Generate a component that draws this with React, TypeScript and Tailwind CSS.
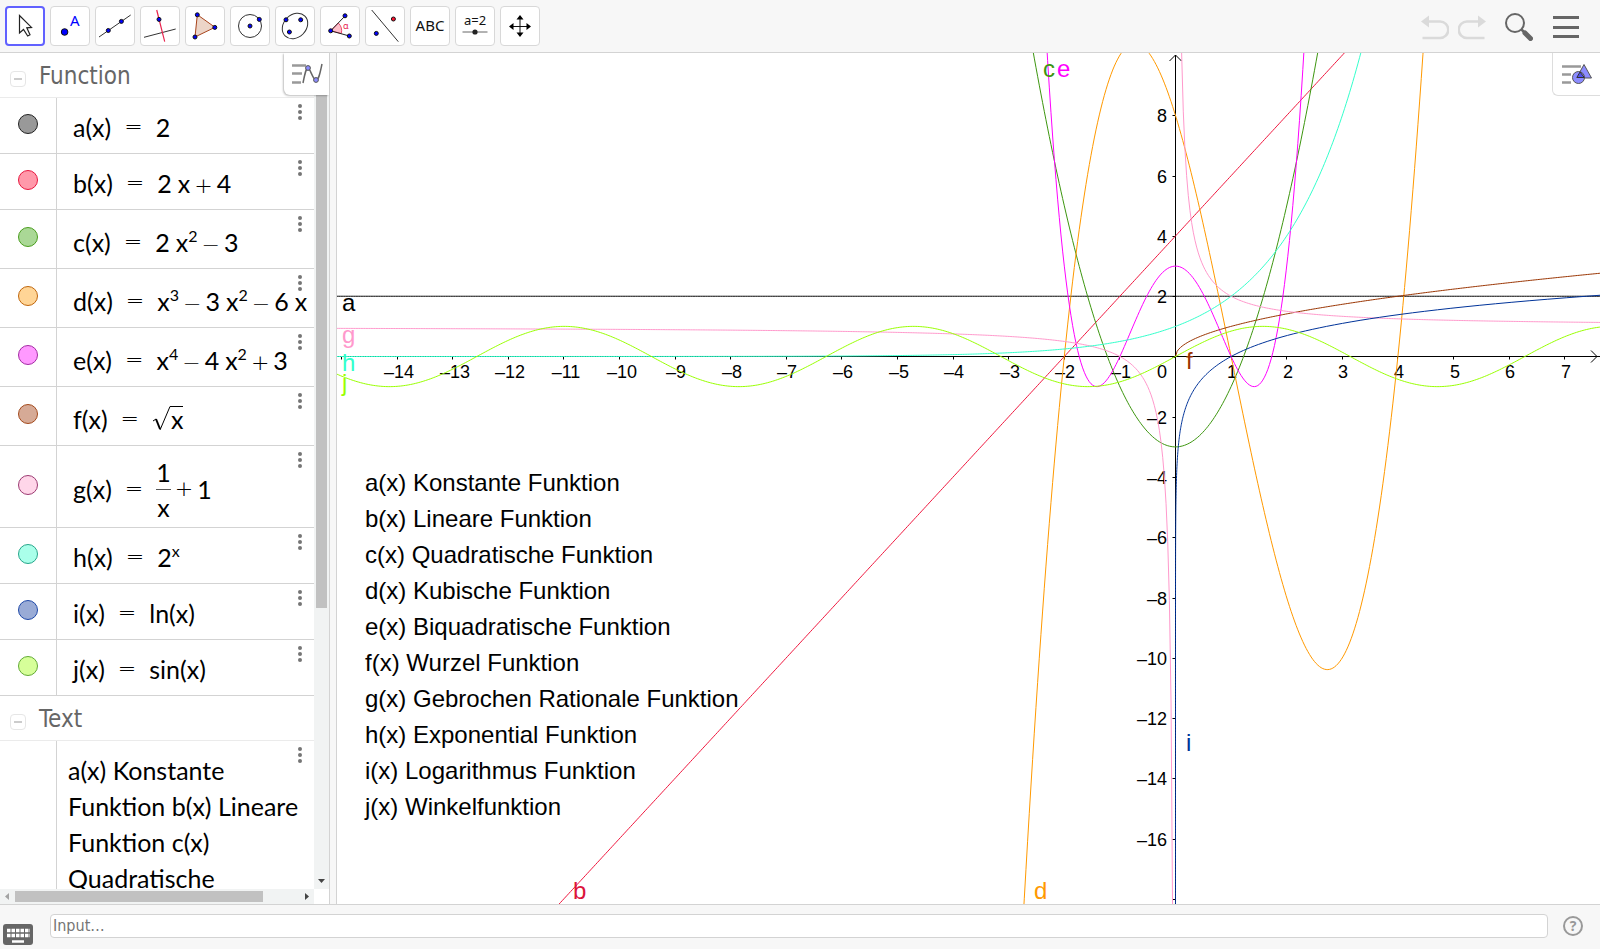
import type { ReactNode } from "react";
import { clsx } from "clsx";

const SANS = "font-['Liberation_Sans',Arial,sans-serif]";
const MATH = "font-[Lato,'Noto_Sans',sans-serif]";
const UI = "font-['Noto_Sans','Open_Sans',sans-serif]";
const CONDENSED = "font-['DejaVu_Sans_Condensed','Noto_Sans',sans-serif]";

// ---------- toolbar ----------

function Pt({ x, y, r = 2, fill = "#0000ff" }: { x: number; y: number; r?: number; fill?: string }) {
  return <circle cx={x} cy={y} r={r} fill={fill} stroke="#111" strokeWidth="1" />;
}

const TOOLS: { name: string; icon: ReactNode }[] = [
  {
    name: "Move",
    icon: (
      <path
        d="M14.5 9.5V27l4-3.5 4.2 6.5 2.3-1.2-3.2-7 4.7-.4z"
        fill="#fff"
        stroke="#222"
        strokeWidth="1.2"
      />
    ),
  },
  {
    name: "Point",
    icon: (
      <>
        <Pt x={14.6} y={26} r={3.3} />
        <text x="20" y="20" fontSize="15" fill="#0000ff">A</text>
      </>
    ),
  },
  {
    name: "Line",
    icon: (
      <>
        <path d="M4 31L35.7 9" stroke="#333" />
        <Pt x={13.3} y={24.5} />
        <Pt x={26.4} y={15.4} />
      </>
    ),
  },
  {
    name: "Perpendicular Line",
    icon: (
      <>
        <path d="M4 31.3L35.7 23" stroke="#333" />
        <path d="M16.7 4L24.7 35.7" stroke="#e8254f" strokeWidth="1.2" />
        <Pt x={19} y={13.4} />
      </>
    ),
  },
  {
    name: "Polygon",
    icon: (
      <>
        <path d="M12.3 8.7L30 21.3L10 31z" fill="#ecd5c8" stroke="#a8441c" />
        <Pt x={12.3} y={8.8} />
        <Pt x={29.8} y={21.4} />
        <Pt x={10} y={31} />
      </>
    ),
  },
  {
    name: "Circle with Center",
    icon: (
      <>
        <circle cx="20" cy="20" r="11.5" fill="none" stroke="#333" />
        <Pt x={20} y={20} />
        <Pt x={29.3} y={13.4} />
      </>
    ),
  },
  {
    name: "Ellipse",
    icon: (
      <>
        <ellipse cx="20" cy="20" rx="14" ry="11.3" fill="none" stroke="#333" transform="rotate(-45 20 20)" />
        <Pt x={11} y={13.8} />
        <Pt x={25.7} y={13.8} />
        <Pt x={14.4} y={26} />
      </>
    ),
  },
  {
    name: "Angle",
    icon: (
      <>
        <path d="M10.7 24.8L18.3 17a11 11 0 0 1 3 10.5z" fill="#ffc0cb" stroke="#e8254f" strokeWidth=".8" />
        <path d="M25 10L10.7 24.8L29.3 30" fill="none" stroke="#222" />
        <Pt x={10.7} y={24.8} />
        <Pt x={25} y={9.8} />
        <Pt x={29.3} y={30} />
        <text x="23" y="23" fontSize="9" fill="#e8254f">α</text>
      </>
    ),
  },
  {
    name: "Reflect about Line",
    icon: (
      <>
        <path d="M6.7 4L33.3 35.7" stroke="#333" />
        <Pt x={28.4} y={13} fill="#ff1030" />
        <Pt x={11.3} y={27.4} />
      </>
    ),
  },
  {
    name: "Text",
    icon: <text x="20" y="25" fontSize="15" textAnchor="middle" fill="#111">ABC</text>,
  },
  {
    name: "Slider",
    icon: (
      <>
        <text x="20" y="19" fontSize="13" textAnchor="middle" fill="#111">a=2</text>
        <path d="M7.5 26H32.5" stroke="#666" />
        <circle cx="20" cy="26" r="2.6" fill="#222" />
      </>
    ),
  },
  {
    name: "Move Graphics View",
    icon: (
      <>
        <path d="M20 12V29M12 20.5H28.5" stroke="#111" />
        <path
          d="M20 9l3.500 4.500h-7zM20 31l3.500-4.500h-7zM9 20.500l4.500-3.500v7zM31 20.500l-4.500-3.500v7z"
          fill="#000"
        />
      </>
    ),
  },
];

function Toolbar() {
  return (
    <header className="flex h-[53px] shrink-0 items-center justify-between border-b border-[#d3d3d3] bg-[#f7f7f7] pr-[21px] pl-[5px]">
      <div className={clsx("flex gap-[5px]", UI)}>
        {TOOLS.map((t, i) => (
          <button
            key={t.name}
            title={t.name}
            aria-label={t.name}
            className={clsx(
              "flex h-10 w-10 items-center justify-center rounded bg-white",
              i === 0 ? "border-2 border-[#6161ff]" : "border border-[#d8d8d8]"
            )}
          >
            <svg width="38" height="38" viewBox="1 1 38 38" className="shrink-0">
              {t.icon}
            </svg>
          </button>
        ))}
      </div>
      <div className="flex items-center pt-px">
        <button aria-label="Undo">
          <svg width="28" height="26" fill="none">
            <path d="M7 7.5H19a7.6 7.6 0 0 1 0 16.5H1.500" stroke="#dadada" strokeWidth="2.5" />
            <path d="M0 7.500L8 1.500v12z" fill="#dadada" />
          </svg>
        </button>
        <button aria-label="Redo" className="ml-[9px]">
          <svg width="28" height="26" fill="none">
            <path d="M21 7.5H9a7.6 7.6 0 0 0 0 16.5H26.500" stroke="#dadada" strokeWidth="2.5" />
            <path d="M28 7.500L20 1.500v12z" fill="#dadada" />
          </svg>
        </button>
        <button aria-label="Search" className="ml-[19px]">
          <svg width="28" height="28" fill="none" stroke="#666">
            <circle cx="10" cy="10" r="9" strokeWidth="2" />
            <path d="M16.5 16.5l3.500 3.500" strokeWidth="2.5" />
            <path d="M20 20l5.500 5.500" strokeWidth="5" strokeLinecap="round" />
          </svg>
        </button>
        <button aria-label="Menu" className="ml-5">
          <svg width="26" height="24" fill="#666">
            <rect y="1" width="26" height="3" />
            <rect y="11" width="26" height="3" />
            <rect y="20" width="26" height="3" />
          </svg>
        </button>
      </div>
    </header>
  );
}

// ---------- algebra view ----------

function Sup({ children }: { children: ReactNode }) {
  return <sup className="-top-[10px] text-base leading-none">{children}</sup>;
}

// wide operators, as in TeX
function Op({ children, wide = false }: { children: ReactNode; wide?: boolean }) {
  return (
    <span className={clsx("font-['DejaVu_Sans',sans-serif] text-[22px] leading-none font-extralight", wide ? "mx-[13px]" : "mx-1")}>
      {children}
    </span>
  );
}

// thin space of an implied product
function Thin() {
  return <i className="mr-[6px]" />;
}

const FUNCTIONS: { name: string; body: ReactNode; marble: string; row: string }[] = [
  { name: "a", marble: "bg-[#999999] border-[#222222]", row: "h-14 pt-px", body: "2" },
  {
    name: "b",
    marble: "bg-[#ff99aa] border-[#e8173f]",
    row: "h-14 pt-px",
    body: <>2<Thin />x<Op>+</Op>4</>,
  },
  {
    name: "c",
    marble: "bg-[#aad896] border-[#4a9e1e]",
    row: "h-[59px] pt-1",
    body: <>2<Thin />x<Sup>2</Sup><Op>−</Op>3</>,
  },
  {
    name: "d",
    marble: "bg-[#ffd596] border-[#c0660c]",
    row: "h-[59px] pt-1",
    body: <>x<Sup>3</Sup><Op>−</Op>3<Thin />x<Sup>2</Sup><Op>−</Op>6<Thin />x</>,
  },
  {
    name: "e",
    marble: "bg-[#ff99ff] border-[#a32ba3]",
    row: "h-[59px] pt-1",
    body: <>x<Sup>4</Sup><Op>−</Op>4<Thin />x<Sup>2</Sup><Op>+</Op>3</>,
  },
  {
    name: "f",
    marble: "bg-[#d6aa96] border-[#a34a1c]",
    row: "h-[59px] pt-1",
    body: (
      <span className="flex items-center">
        <svg width="19" height="26" fill="none" stroke="#000">
          <path d="M1 15l3-2" />
          <path d="M4 13l4 10" strokeWidth="2" />
          <path d="M8 24L18 .5H19" />
        </svg>
        <span className="h-[26px] border-t border-black leading-[25px]">x</span>
      </span>
    ),
  },
  {
    name: "g",
    marble: "bg-[#ffd6e9] border-[#9c3a72]",
    row: "h-[82px] pt-1",
    body: (
      <span className="flex items-center">
        <span className="flex flex-col text-center leading-[34px]">
          <span className="border-b border-[#555]">1</span>
          <span>x</span>
        </span>
        <Op>+</Op>1
      </span>
    ),
  },
  { name: "h", marble: "bg-[#aaffea] border-[#26a68a]", row: "h-14 pt-px", body: <>2<Sup>x</Sup></> },
  { name: "i", marble: "bg-[#99abd6] border-[#1f49a8]", row: "h-14 pt-px", body: "ln(x)" },
  { name: "j", marble: "bg-[#d6ff99] border-[#62ab35]", row: "h-14 pt-px", body: "sin(x)" },
];

function MoreButton() {
  return (
    <button aria-label="More" className="absolute top-[6px] right-3 flex flex-col gap-[2px]">
      <i className="h-1 w-1 rounded-full bg-[#757575]" />
      <i className="h-1 w-1 rounded-full bg-[#757575]" />
      <i className="h-1 w-1 rounded-full bg-[#757575]" />
    </button>
  );
}

function SectionHeader({ title }: { title: string }) {
  return (
    <div className="flex h-[45px] items-center border-b border-[#ebebeb] pl-[10px]">
      <button
        aria-label={`Collapse ${title}`}
        className="mt-[7px] flex h-4 w-4 items-center justify-center rounded border border-[#e6e6e6]"
      >
        <i className="h-[2px] w-2 bg-[#ccc]" />
      </button>
      <h2 className={clsx("ml-[13px] pt-[2px] text-2xl text-[#666]", CONDENSED)}>{title}</h2>
    </div>
  );
}

function AlgebraView() {
  return (
    <section className="relative flex w-[330px] shrink-0 flex-col border-r border-[#d3d3d3] bg-white">
      <div className="flex min-h-0 flex-1">
        <div className="min-w-0 flex-1 overflow-hidden">
          <SectionHeader title="Function" />
          {FUNCTIONS.map((f) => (
            <div key={f.name} className="relative flex border-b border-[#d3d3d3]">
              <div className="flex w-[57px] shrink-0 items-center justify-center border-r border-[#d3d3d3] pb-1">
                <button aria-label={`Show ${f.name}`} className={clsx("h-5 w-5 rounded-full border", f.marble)} />
              </div>
              <div
                className={clsx(
                  "-mb-px flex flex-1 items-center pl-4 text-[25px] leading-9 whitespace-nowrap text-black",
                  MATH,
                  f.row
                )}
              >
                <span>{f.name}(x)</span>
                <Op wide>=</Op>
                <span>{f.body}</span>
              </div>
              <MoreButton />
            </div>
          ))}
          <SectionHeader title="Text" />
          <div className="relative flex">
            <div className="w-[57px] shrink-0 border-r border-[#d3d3d3]" />
            <p className={clsx("flex-1 pt-[11px] pl-[11px] text-[25px] leading-9 text-black", MATH)}>
              a(x) Konstante
              <br />
              Funktion b(x) Lineare
              <br />
              Funktion c(x)
              <br />
              Quadratische
            </p>
            <MoreButton />
          </div>
        </div>
        <div className="flex w-[15px] flex-col bg-[#f1f3f3]">
          <div className="mx-[2px] h-[555px] bg-[#c1c1c1]" />
          <svg width="15" height="15" className="mt-auto" fill="#444">
            <path d="M4 5h7l-3.500 4z" />
          </svg>
        </div>
      </div>
      <div className="mr-[15px] flex h-[15px] shrink-0 items-center bg-[#f1f3f3]">
        <svg width="15" height="15" fill="#a3a3a3">
          <path d="M9 4v7l-4-3.500z" />
        </svg>
        <div className="h-[11px] w-[248px] bg-[#c1c1c1]" />
        <svg width="15" height="15" className="ml-auto" fill="#444">
          <path d="M6 4v7l4-3.500z" />
        </svg>
      </div>
      <button
        aria-label="Algebra view style"
        className="absolute top-0 right-0 flex h-[42px] w-[45px] items-center justify-center rounded-bl-md bg-white shadow-[-1px_1px_2px_rgba(0,0,0,0.25)]"
      >
        <svg width="32" height="22" fill="none">
          <path d="M1 2.500H15M1 10.500H11M1 19.500H10" stroke="#999" strokeWidth="2.500" />
          <path d="M12 20C14 10 15 5 17 5S22 17 25 17S29 10 31 1" stroke="#666" strokeWidth="1.500" />
          <circle cx="17" cy="5" r="2.4" fill="#8c8cff" stroke="#555" />
          <circle cx="25" cy="17" r="2.4" fill="#8c8cff" stroke="#555" />
        </svg>
      </button>
    </section>
  );
}

// ---------- graphics view ----------

const OX = 838.5; // origin in the drawing pad
const OY = 303.5;
const UX = 55.6; // pixels per unit
const UY = 30.13;

const px = (x: number) => OX + x * UX;
const py = (y: number) => OY - y * UY;

function plot(fn: (x: number) => number, from = -15.2, to = 40) {
  let d = "";
  for (let x = from; x <= to; x += 0.03) {
    const y = Math.max(-60, Math.min(60, fn(x)));
    d += `${d ? "L" : "M"}${px(x).toFixed(2)} ${py(y).toFixed(2)}`;
  }
  return d;
}

// steep near the y axis, so sampled by height
function plotLn() {
  let d = "";
  for (let y = -30; y <= 4; y += 0.05) {
    d += `${d ? "L" : "M"}${px(Math.exp(y)).toFixed(2)} ${py(y).toFixed(2)}`;
  }
  return d;
}

const CURVES = [
  { color: "#000000", d: plot(() => 2) },
  { color: "#f0143c", d: plot((x) => 2 * x + 4) },
  { color: "#3d960f", d: plot((x) => 2 * x * x - 3) },
  { color: "#ff9900", d: plot((x) => x ** 3 - 3 * x * x - 6 * x + 8) },
  { color: "#ff00ff", d: plot((x) => x ** 4 - 4 * x * x + 3) },
  { color: "#993300", d: plot((x) => Math.sqrt(x), 0) },
  { color: "#ff99cc", d: plot((x) => 1 / x + 1, -15.2, -0.01) + plot((x) => 1 / x + 1, 0.02) },
  { color: "#33ffcc", d: plot((x) => 2 ** x) },
  { color: "#003399", d: plotLn() },
  { color: "#99ff00", d: plot((x) => Math.sin(x)) },
];

const CURVE_LABELS = [
  { t: "a", x: 5, y: 258, c: "#000000" },
  { t: "b", x: 236, y: 846, c: "#dc143c" },
  { t: "c", x: 706, y: 24, c: "#3d960f" },
  { t: "d", x: 697, y: 846, c: "#ff9900" },
  { t: "e", x: 720, y: 24, c: "#ff00ff" },
  { t: "f", x: 849, y: 316, c: "#993300" },
  { t: "g", x: 5, y: 290, c: "#ff99cc" },
  { t: "h", x: 5, y: 318, c: "#33ffcc" },
  { t: "i", x: 849, y: 698, c: "#003399" },
  { t: "j", x: 5, y: 338, c: "#99ff00" },
];

const LEGEND = [
  "a(x) Konstante Funktion",
  "b(x) Lineare Funktion",
  "c(x) Quadratische Funktion",
  "d(x) Kubische Funktion",
  "e(x) Biquadratische Funktion",
  "f(x) Wurzel Funktion",
  "g(x) Gebrochen Rationale Funktion",
  "h(x) Exponential Funktion",
  "i(x) Logarithmus Funktion",
  "j(x) Winkelfunktion",
];

const range = (from: number, to: number, step: number) =>
  Array.from({ length: Math.floor((to - from) / step) + 1 }, (_, i) => from + i * step);

const label = (n: number) => (n < 0 ? `–${-n}` : `${n}`);

function GraphicsView() {
  return (
    <section className="relative min-w-0 flex-1 overflow-hidden border-l border-[#d3d3d3] bg-white">
      <svg className={clsx("block h-full w-full", SANS)} fill="none">
        <g stroke="#000">
          <path d={`M0 ${OY}H4000M${OX} 2V2000`} />
          <path d={`M${OX - 6} 8L${OX} 2L${OX + 6} 8`} />
          {range(-15, 7, 1).map((n) => (
            <path key={n} d={`M${Math.round(px(n) - 0.5) + 0.5} ${OY}v3`} />
          ))}
          {range(-18, 8, 2).map((n) => (
            <path key={n} d={`M${OX} ${Math.round(py(n)) + 0.5}h-3`} />
          ))}
        </g>
        <svg x="100%" y={OY} overflow="visible">
          <path d="M-9 -6L-3 0L-9 6" stroke="#000" />
        </svg>
        <g fill="#000" fontSize="18">
          {range(-14, 7, 1).filter((n) => n !== 0).map((n) => (
            <text key={n} x={Math.round(px(n)) + (n < -9 ? 2 : 1)} y="325" textAnchor="middle">
              {label(n)}
            </text>
          ))}
          {range(-16, 8, 2).filter((n) => n !== 0).map((n) => (
            <text key={n} x="830" y={Math.round(py(n)) + 7} textAnchor="end">
              {label(n)}
            </text>
          ))}
          <text x="830" y="325" textAnchor="end">0</text>
        </g>
        {CURVES.map((c) => (
          <path key={c.color} d={c.d} stroke={c.color} />
        ))}
        <g fontSize="24">
          {CURVE_LABELS.map((l) => (
            <text key={l.t} x={l.x} y={l.y} fill={l.c}>
              {l.t}
            </text>
          ))}
          {LEGEND.map((t, i) => (
            <text key={t} x="28" y={438 + i * 36} fill="#000">
              {t}
            </text>
          ))}
        </g>
      </svg>
      <button
        aria-label="Graphics view style"
        className="absolute top-0 right-0 flex h-[43px] w-12 items-center justify-center rounded-bl-md border-b border-l border-[#ddd] bg-white"
      >
        <svg width="32" height="22" fill="none">
          <path d="M1 3.500H20M1 11.500H10M1 19.500H10" stroke="#999" strokeWidth="2.500" />
          <path d="M23 1.500L30.500 15H15.500z" fill="#8c8cff" stroke="#555" />
          <circle cx="17.5" cy="14.5" r="6" fill="#8c8cff" stroke="#555" />
          <path d="M19 9l4.300 5.500H15.800z" fill="#5050f0" stroke="#333" />
        </svg>
      </button>
    </section>
  );
}

function InputBar() {
  return (
    <footer className="flex h-[45px] shrink-0 items-center border-t border-[#d3d3d3] bg-[#f7f7f7] pr-[17px] pb-[2px] pl-[3px]">
      <button aria-label="Keyboard" className="mt-[18px]">
        <svg width="30" height="22">
          <rect width="30" height="21" rx="3" fill="#666" />
          <path d="M4 6.500H27M4 11.500H27" stroke="#fff" strokeWidth="3.500" strokeDasharray="3.500 1" />
          <path d="M9 17.500H21" stroke="#fff" strokeWidth="2.500" />
        </svg>
      </button>
      <input
        aria-label="Input"
        placeholder="Input…"
        className={clsx(
          "mr-[15px] ml-[17px] h-6 min-w-0 flex-1 rounded border border-[#d3d3d3] bg-white px-[2px] pb-px text-base leading-5 text-black placeholder-[#757575]",
          CONDENSED
        )}
      />
      <button
        aria-label="Help"
        className={clsx(
          "flex h-5 w-5 items-center justify-center rounded-full border-2 border-[#999] text-sm leading-none font-bold text-[#999]",
          UI
        )}
      >
        ?
      </button>
    </footer>
  );
}

export default function App() {
  return (
    <div className="flex h-screen flex-col overflow-hidden bg-[#f7f7f7]">
      <Toolbar />
      <main className="flex min-h-0 flex-1 gap-[6px]">
        <AlgebraView />
        <GraphicsView />
      </main>
      <InputBar />
    </div>
  );
}
